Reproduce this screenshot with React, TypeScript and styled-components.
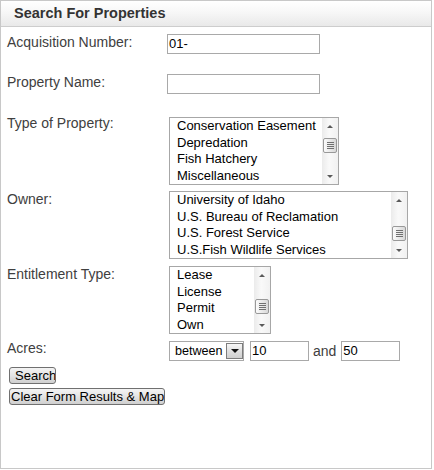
import React from "react";
import styled, { createGlobalStyle } from "styled-components";

const GlobalStyle = createGlobalStyle`
  html, body {
    margin: 0;
    padding: 0;
    background: #ffffff;
  }
  body {
    font-family: "Liberation Sans", Arial, sans-serif;
  }
  * { box-sizing: border-box; }
`;

const Panel = styled.div`
  width: 432px;
  height: 469px;
  border: 1px solid #c8c8c8;
  background: #ffffff;
  display: flex;
  flex-direction: column;
`;

const Header = styled.div`
  height: 26px;
  border-bottom: 1px solid #cdcdcd;
  background: linear-gradient(#ffffff 0%, #f7f7f7 45%, #e9e9e9 100%);
  padding-left: 13px;
  font-weight: bold;
  font-size: 14.5px;
  line-height: 25px;
  color: #333333;
`;

const Body = styled.div`
  padding: 7px 0 0 6px;
  display: flex;
  flex-direction: column;
`;

const Row = styled.div<{ $after: number }>`
  display: grid;
  grid-template-columns: 160px 1fr;
  align-items: start;
  margin-bottom: ${(p) => p.$after}px;
`;

const Label = styled.div<{ $lift?: number }>`
  font-size: 14px;
  line-height: 16px;
  color: #404040;
  margin-top: ${(p) => -(p.$lift ?? 0)}px;
  white-space: nowrap;
`;

const TextInput = styled.div<{ $w: number }>`
  width: ${(p) => p.$w}px;
  height: 20px;
  border: 1px solid #a9a9a9;
  background: #fff;
  font-size: 13px;
  line-height: 18px;
  padding-left: 1px;
  color: #000;
`;

const ListBox = styled.div<{ $w: number }>`
  width: ${(p) => p.$w}px;
  height: 68px;
  margin-left: 2px;
  border: 1px solid #a7a7a7;
  background: #fff;
  display: flex;
`;

const Items = styled.div`
  flex: 1;
  padding: 0 0 0 7px;
  overflow: hidden;
`;

const Item = styled.div`
  font-size: 13px;
  line-height: 16.6px;
  color: #000;
  white-space: nowrap;
`;

const Scrollbar = styled.div`
  width: 16px;
  display: flex;
  flex-direction: column;
  background: linear-gradient(to right, #ebebeb, #f9f9f9 45%, #f1f1f1);
`;

const ArrowBox = styled.div`
  height: 16px;
  display: flex;
  align-items: center;
  justify-content: center;
`;

const Tri = styled.div<{ $dir: "up" | "down" }>`
  width: 0;
  height: 0;
  border-left: 3.5px solid transparent;
  border-right: 3.5px solid transparent;
  ${(p) =>
    p.$dir === "up"
      ? `border-bottom: 3px solid #5a5a5a;`
      : `border-top: 3px solid #5a5a5a;`}
`;

const Track = styled.div`
  flex: 1;
  display: flex;
  flex-direction: column;
`;

const Thumb = styled.div<{ $top: number }>`
  margin: ${(p) => p.$top}px 0 0 1px;
  width: 14px;
  height: 15px;
  border: 1px solid #999999;
  border-radius: 2px;
  background: linear-gradient(to right, #fbfbfb, #e6e6e6 60%, #d8d8d8);
  display: flex;
  flex-direction: column;
  align-items: center;
  justify-content: center;
  gap: 1px;
`;

const Grip = styled.div`
  width: 7px;
  height: 1px;
  background: #707070;
`;

const ControlLine = styled.div`
  display: flex;
  align-items: center;
  margin-left: 2px;
`;

const Select = styled.div`
  width: 75px;
  height: 20px;
  border: 1px solid #a9a9a9;
  background: #fff;
  display: flex;
  align-items: center;
  margin-right: 6px;
`;

const SelectText = styled.div`
  flex: 1;
  font-size: 12.6px;
  padding-left: 5px;
  color: #000;
  line-height: 18px;
`;

const DropButton = styled.div`
  width: 17px;
  height: 16px;
  border: 1px solid #7c7c7c;
  background: linear-gradient(#f6f6f6, #dedede 55%, #cfcfcf);
  display: flex;
  align-items: center;
  justify-content: center;
`;

const DropTri = styled.div`
  width: 0;
  height: 0;
  border-left: 4px solid transparent;
  border-right: 4px solid transparent;
  border-top: 4px solid #111;
`;

const Word = styled.span`
  font-size: 14px;
  color: #404040;
  margin: 0 5px 0 4px;
`;

const Button = styled.div<{ $w: number; $pad: number }>`
  width: ${(p) => p.$w}px;
  height: 17px;
  margin-left: 2px;
  border: 1px solid #707070;
  border-radius: 3px;
  background: linear-gradient(#f4f4f4, #e4e4e4 50%, #cfcfcf);
  font-size: 13px;
  line-height: 15px;
  color: #000;
  padding-left: ${(p) => p.$pad}px;
  white-space: nowrap;
  overflow: hidden;
`;

const ButtonStack = styled.div`
  display: flex;
  flex-direction: column;
  gap: 4px;
`;

type ListProps = { width: number; items: string[]; thumbTop: number };

function List({ width, items, thumbTop }: ListProps) {
  return (
    <ListBox $w={width}>
      <Items>
        {items.map((t) => (
          <Item key={t}>{t}</Item>
        ))}
      </Items>
      <Scrollbar>
        <ArrowBox>
          <Tri $dir="up" />
        </ArrowBox>
        <Track>
          <Thumb $top={thumbTop}>
            <Grip />
            <Grip />
            <Grip />
            <Grip />
          </Thumb>
        </Track>
        <ArrowBox>
          <Tri $dir="down" />
        </ArrowBox>
      </Scrollbar>
    </ListBox>
  );
}

export default function App() {
  return (
    <>
      <GlobalStyle />
      <Panel>
        <Header>Search For Properties</Header>
        <Body>
          <Row $after={20}>
            <Label>Acquisition Number:</Label>
            <TextInput $w={153}>01-</TextInput>
          </Row>
          <Row $after={23}>
            <Label>Property Name:</Label>
            <TextInput $w={153}></TextInput>
          </Row>
          <Row $after={6}>
            <Label $lift={2}>Type of Property:</Label>
            <List
              width={170}
              thumbTop={4}
              items={["Conservation Easement", "Depredation", "Fish Hatchery", "Miscellaneous"]}
            />
          </Row>
          <Row $after={7}>
            <Label>Owner:</Label>
            <List
              width={239}
              thumbTop={18}
              items={[
                "University of Idaho",
                "U.S. Bureau of Reclamation",
                "U.S. Forest Service",
                "U.S.Fish Wildlife Services",
              ]}
            />
          </Row>
          <Row $after={7}>
            <Label>Entitlement Type:</Label>
            <List width={102} thumbTop={16} items={["Lease", "License", "Permit", "Own"]} />
          </Row>
          <Row $after={6}>
            <Label $lift={1}>Acres:</Label>
            <ControlLine>
              <Select>
                <SelectText>between</SelectText>
                <DropButton>
                  <DropTri />
                </DropButton>
              </Select>
              <TextInput $w={59}>10</TextInput>
              <Word>and</Word>
              <TextInput $w={59}>50</TextInput>
            </ControlLine>
          </Row>
          <ButtonStack>
            <Button $w={47} $pad={5}>Search</Button>
            <Button $w={156} $pad={1}>Clear Form Results &amp; Map</Button>
          </ButtonStack>
        </Body>
      </Panel>
    </>
  );
}
